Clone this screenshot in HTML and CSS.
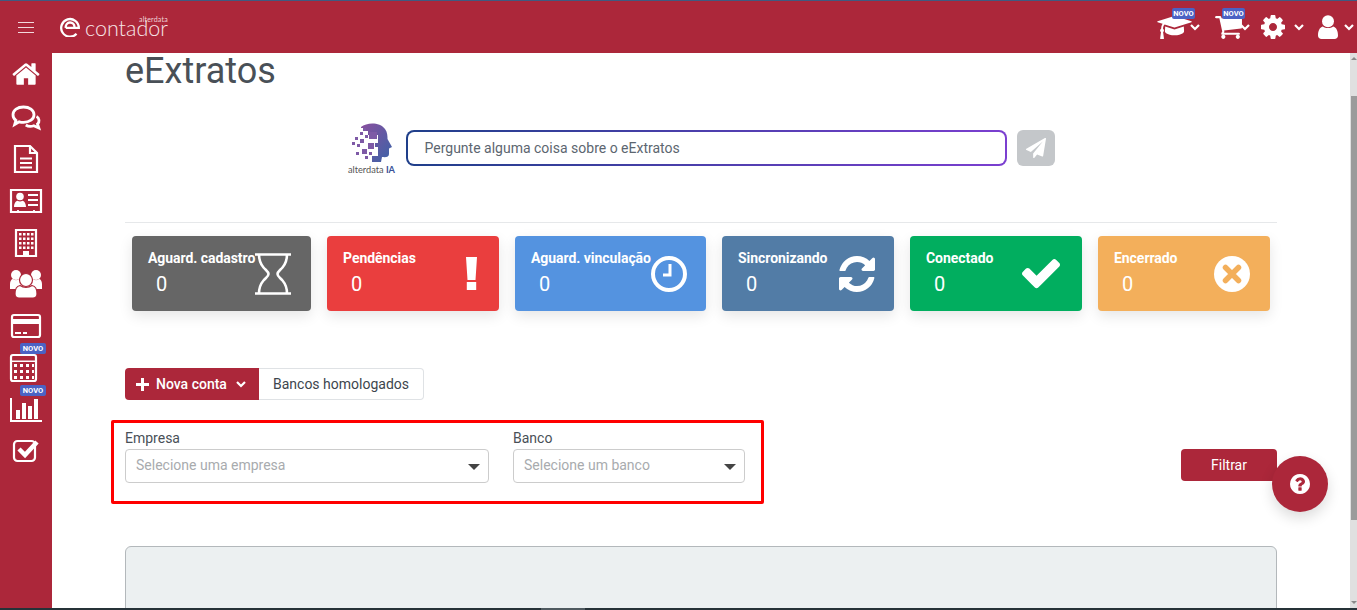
FILE: index.html
```html
<!DOCTYPE html>
<html lang="pt-BR">
<head>
<meta charset="utf-8">
<title>eExtratos</title>
<link rel="stylesheet" href="styles.css">
</head>
<body>
<header class="topbar">
  <div class="hamburger"><span></span><span></span><span></span></div>
  <div class="brand">
    <svg class="brand-mark" viewBox="0 0 20 20"><path d="M16.500 16.800A8.800 8.800 0 1 1 18.800 10.800H5.800M5.800 10.800C5.300 8 7.300 5.500 10 5.500s4.500 2 4.500 4.500" fill="none" stroke="#fff" stroke-width="2.300"/></svg>
    <div class="brand-text"><span class="brand-small">alterdata</span><span class="brand-name">contador</span></div>
  </div>
  <nav class="top-actions">
    <div class="top-item top-cap">
      <svg class="ic-cap" viewBox="0 128 2304 1536"><path fill="#fff" d="M1774 836l18 316q4 69-82 128t-235 93.500-323 34.500-323-34.500-235-93.500-82-128l18-316 574 181q22 7 48 7t48-7zm530-324q0 23-22 31l-1120 352q-4 1-10 1t-10-1l-652-206q-43 34-71 111.500t-34 178.500q63 36 63 109 0 69-58 107l58 433q2 14-8 25-9 11-24 11h-192q-15 0-24-11-10-11-8-25l58-433q-58-38-58-107 0-73 65-111 11-207 98-330l-333-104q-22-8-22-31t22-31l1120-352q4-1 10-1t10 1l1120 352q22 8 22 31z"/></svg>
      <span class="badge badge-top">NOVO</span>
      <svg class="chev" viewBox="0 0 10 7"><path d="M1 1l4 4 4-4" fill="none" stroke="#fff" stroke-width="2.200"/></svg>
    </div>
    <div class="top-item top-cart">
      <svg class="ic-cart" viewBox="0 256 1792 1408"><path fill="#fff" d="M704 1536q0 52-38 90t-90 38-90-38-38-90 38-90 90-38 90 38 38 90zm896 0q0 52-38 90t-90 38-90-38-38-90 38-90 90-38 90 38 38 90zm128-1088v512q0 24-16.500 42.500t-40.500 21.500l-1044 122q13 60 13 70 0 16-24 64h920q26 0 45 19t19 45-19 45-45 19h-1024q-26 0-45-19t-19-45q0-11 8-31.500t16-36 21.500-40 15.500-29.500l-177-823h-204q-26 0-45-19t-19-45 19-45 45-19h256q16 0 28.500 6.500t19.500 15.500 13 24.500 8 26 5.500 29.500 4.500 26h1201q26 0 45 19t19 45z"/></svg>
      <span class="badge badge-top">NOVO</span>
      <svg class="chev" viewBox="0 0 10 7"><path d="M1 1l4 4 4-4" fill="none" stroke="#fff" stroke-width="2.200"/></svg>
    </div>
    <div class="top-item top-gear">
      <svg class="ic-gear" viewBox="128 128 1536 1536"><path fill="#fff" d="M1152 896q0-106-75-181t-181-75-181 75-75 181 75 181 181 75 181-75 75-181zm512-109v222q0 12-8 23t-20 13l-185 28q-19 54-39 91 35 50 107 138 10 12 10 25t-9 23q-27 37-99 108t-94 71q-12 0-26-9l-138-108q-44 23-91 38-16 136-29 186-7 28-36 28h-222q-14 0-24.500-8.500t-11.500-21.500l-28-184q-49-16-90-37l-141 107q-10 9-25 9-14 0-25-11-126-114-165-168-7-10-7-23 0-12 8-23 15-21 51-66.500t54-70.500q-27-50-41-99l-183-27q-13-2-21-12.500t-8-23.500v-222q0-12 8-23t19-13l186-28q14-46 39-92-40-57-107-138-10-12-10-24 0-10 9-23 26-36 98.500-107.500t94.500-71.500q13 0 26 10l138 107q44-23 91-38 16-136 29-186 7-28 36-28h222q14 0 24.500 8.500t11.500 21.500l28 184q49 16 90 37l142-107q9-9 24-9 13 0 25 10 129 119 165 170 7 8 7 22 0 12-8 23-15 21-51 66.500t-54 70.500q26 50 41 98l183 28q13 2 21 12.500t8 23.500z"/></svg>
      <svg class="chev" viewBox="0 0 10 7"><path d="M1 1l4 4 4-4" fill="none" stroke="#fff" stroke-width="2.200"/></svg>
    </div>
    <div class="top-item top-user">
      <svg class="ic-user" viewBox="0 0 20 24"><circle cx="10" cy="6.200" r="6"/><path d="M0 20.500C0 16 1.500 12.500 4.800 11.500c3 2 7.400 2 10.400 0C18.500 12.500 20 16 20 20.500 20 22.800 18.500 24 16.500 24h-13C1.500 24 0 22.800 0 20.500z"/></svg>
      <svg class="chev" viewBox="0 0 10 7"><path d="M1 1l4 4 4-4" fill="none" stroke="#fff" stroke-width="2.200"/></svg>
    </div>
  </nav>
</header>

<div class="shell">
  <aside class="sidebar">
    <div class="nav-item"><svg class="nav-ico ic-home" viewBox="0 0 1792 1792"><path d="M1472 992v480q0 26-19 45t-45 19h-384v-384h-256v384h-384q-26 0-45-19t-19-45v-480q0-1 .5-3t.5-3l575-474 575 474q1 2 1 6zm223-69l-62 74q-8 9-21 11h-3q-13 0-21-7l-692-577-692 577q-12 8-24 7-13-2-21-11l-62-74q-8-10-7-23.500t11-21.500l719-599q32-26 76-26t76 26l244 204v-195q0-14 9-23t23-9h192q14 0 23 9t9 23v408l219 182q10 8 11 21.500t-7 23.500z"/></svg></div>
    <div class="nav-item"><svg class="nav-ico" viewBox="0 0 52 42"><path class="ln bold" d="M36.500 21.500c3 1.500 3.300 5.500 1 7.500l1.300 4-5-2.200c-2.800 1-6 .6-8-.8"/><path class="ln bold" d="M23.500 12c6 0 10.500 3.300 10.500 7.700s-4.500 7.700-10.500 7.700c-1.500 0-3-.2-4.300-.6L14.700 29.500l1.200-4.200c-2-1.400-2.900-3.400-2.900-5.600 0-4.400 4.500-7.700 10.500-7.700z"/></svg></div>
    <div class="nav-item"><svg class="nav-ico" viewBox="0 0 52 42"><path class="ln" d="M15 9h15l7 7v19H15z"/><path class="ln" d="M30 9v7h7"/><path class="ln thin" d="M20 21.500h12M20 26h12M20 30.500h12"/></svg></div>
    <div class="nav-item"><svg class="nav-ico" viewBox="0 0 52 42"><path class="ln" d="M11 11h30v22H11z"/><circle class="fl" cx="20" cy="17.500" r="3.800"/><path class="fl" d="M14 28c0-4 2-6 3.500-6.300 1.500 1 3.500 1 5 0C24 22 26 24 26 28z"/><path class="ln thin" d="M28 16h10M28 21h10M28 26h10M18 31v3M34 31v3"/></svg></div>
    <div class="nav-item"><svg class="nav-ico" viewBox="0 0 52 42"><path class="ln" d="M16 9h20v26H16z"/><path class="fl" d="M23 30h6v5h-6zM19 12h2.500v2.500H19zM23 12h2.500v2.500H23zM27 12h2.500v2.500H27zM31 12h2.500v2.500H31zM19 16.500h2.500V19H19zM23 16.500h2.500V19H23zM27 16.500h2.500V19H27zM31 16.500h2.500V19H31zM19 21h2.500v2.500H19zM23 21h2.500v2.500H23zM27 21h2.500v2.500H27zM31 21h2.500v2.500H31zM19 25.500h2.500V28H19zM23 25.500h2.500V28H23zM27 25.500h2.500V28H27zM31 25.500h2.500V28H31z"/></svg></div>
    <div class="nav-item"><svg class="nav-ico" viewBox="0 0 52 42"><circle class="fl" cx="16" cy="13" r="5"/><circle class="fl" cx="36" cy="13" r="5"/><path class="fl" d="M10 27v-5c0-3 1.500-5 3-5 2 1.500 4 1.500 6 0h14c2 1.500 4 1.500 6 0 1.500 0 3 2 3 5v5z"/><circle class="fl halo" cx="26" cy="18" r="6.500"/><path class="fl halo" d="M15 32c0-5 2-8 5-8.500 3.500 2.500 8.500 2.500 12 0 3 .5 5 3.500 5 8.500 0 2.500-2 4-4 4H19c-2 0-4-1.500-4-4z"/></svg></div>
    <div class="nav-item"><svg class="nav-ico" viewBox="0 0 52 42"><rect class="ln" x="12" y="11" width="28" height="22" rx="2"/><path class="fl" d="M12 15h28v5H12zM15 28h6v2h-6zM23 28h4v2h-4z"/></svg></div>
    <div class="nav-item"><svg class="nav-ico" viewBox="0 0 52 42"><rect class="ln" x="11" y="9" width="25" height="26" rx="2"/><path class="fl" d="M11 14.500h25V16H11zM14 18h3v3h-3zM20 18h3v3h-3zM26 18h3v3h-3zM32 18h2v3h-2zM14 24h3v3h-3zM20 24h3v3h-3zM26 24h3v3h-3zM32 24h2v3h-2zM14 30h3v3h-3zM20 30h3v3h-3zM26 30h3v3h-3zM32 30h2v3h-2z"/></svg><span class="badge badge-side">NOVO</span></div>
    <div class="nav-item"><svg class="nav-ico" viewBox="0 0 52 42"><path class="fl" d="M10 10h2v22h30v2H10zM16 22h4v9h-4zM22 15h4v16h-4zM28 18h4v13h-4zM34 11h4v20h-4z"/></svg><span class="badge badge-side">NOVO</span></div>
    <div class="nav-item"><svg class="nav-ico" viewBox="0 0 52 42"><rect class="ln" x="14" y="11" width="21" height="20" rx="3.500"/><path class="tick" d="M19 19l6 6 12-13"/></svg></div>
  </aside>

  <main class="content">
    <h1 class="page-title">eExtratos</h1>

    <section class="ask">
      <div class="ai-logo">
        <svg class="ai-mark" viewBox="0 0 48 40">
          <defs><linearGradient id="aiGrad" x1="0" y1="0" x2="1" y2="1"><stop offset="0" stop-color="#8a4f9e"/><stop offset="1" stop-color="#3a63a8"/></linearGradient></defs>
          <path fill="url(#aiGrad)" d="M13 4C19-1 32-1 37 6c2.500 3.500 2.500 7 2.500 10l4.500 8-3 1.500V31c0 3-3 3.500-7 3l-1 5H24v-6h6v-9h-3v-4h3v-8H20V8h-4V5h-3z"/>
          <path fill="#7e5aa6" d="M21 9h8v7h-8zM12 9h3v3h-3zM17 12h3v3h-3zM7 14h3v3H7zM12 16h4v4h-4zM4 19h3v3H4zM9 21h3v3H9zM20 20h6v6h-6zM14 26h5v5h-5zM8 29h3v3H8zM21 29h3v3h-3zM17 33h3v3h-3zM15 5h3v3h-3z"/>
        </svg>
        <span class="ai-name">alterdata <b>IA</b></span>
      </div>
      <div class="ask-field">Pergunte alguma coisa sobre o eExtratos</div>
      <button class="ask-send" type="button"><svg class="ic-send" viewBox="0 0 1792 1792"><path fill="#fff" d="M1764 11q33 24 27 64l-256 1536q-5 29-32 45-14 8-31 8-11 0-24-5l-453-185-242 295q-18 23-49 23-13 0-22-4-19-7-30.500-23.500t-11.500-36.500v-349l864-1059-1069 925-395-162q-37-14-40-55-2-40 32-59l1664-960q15-9 32-9 20 0 36 11z"/></svg></button>
    </section>

    <hr class="divider">

    <section class="cards">
      <article class="card card-gray">
        <div class="card-text"><div class="card-title">Aguard. cadastro</div><div class="card-value">0</div></div>
        <svg class="card-ico ic-hour" viewBox="0 0 36 42"><path d="M0 1.500h36M0 40.500h36M4 1.500c0 5 1.500 9.500 4.500 13 2.500 2.800 5 4 5 6.500s-2.500 3.700-5 6.500c-3 3.500-4.500 8-4.500 13M32 1.500c0 5-1.500 9.500-4.500 13-2.500 2.800-5 4-5 6.500s2.500 3.700 5 6.500c3 3.500 4.500 8 4.500 13" fill="none" stroke="#fff" stroke-width="2.600"/></svg>
      </article>
      <article class="card card-red">
        <div class="card-text"><div class="card-title">Pendências</div><div class="card-value">0</div></div>
        <svg class="card-ico ic-excl" viewBox="0 0 11 33"><path fill="#fff" d="M0 0h11L9.500 23h-8zM.8 25h9.400v8H.8z"/></svg>
      </article>
      <article class="card card-blue">
        <div class="card-text"><div class="card-title">Aguard. vinculação</div><div class="card-value">0</div></div>
        <svg class="card-ico ic-clock" viewBox="0 0 36 36"><circle cx="18" cy="18" r="16" fill="none" stroke="#fff" stroke-width="4"/><path d="M19 8v11h-7" fill="none" stroke="#fff" stroke-width="3"/></svg>
      </article>
      <article class="card card-steel">
        <div class="card-text"><div class="card-title">Sincronizando</div><div class="card-value">0</div></div>
        <svg class="card-ico ic-sync" viewBox="128 128 1536 1536"><path fill="#fff" d="M1639 1056q0 5-1 7-64 268-268 434.500t-478 166.500q-146 0-282.500-55t-243.500-157l-129 129q-19 19-45 19t-45-19-19-45v-448q0-26 19-45t45-19h448q26 0 45 19t19 45-19 45l-137 137q71 66 161 102t187 36q134 0 250-65t186-179q11-17 53-117 8-23 30-23h192q13 0 22.500 9.500t9.500 22.500zm25-800v448q0 26-19 45t-45 19h-448q-26 0-45-19t-19-45 19-45l138-138q-148-137-349-137-134 0-250 65t-186 179q-11 17-53 117-8 23-30 23h-199q-13 0-22.500-9.500t-9.500-22.500v-7q65-268 270-434.500t480-166.500q146 0 284 55.500t245 156.500l130-129q19-19 45-19t45 19 19 45z"/></svg>
      </article>
      <article class="card card-green">
        <div class="card-text"><div class="card-title">Conectado</div><div class="card-value">0</div></div>
        <svg class="card-ico ic-check" viewBox="121 340 1550 1210"><path fill="#fff" d="M1671 566q0 40-28 68l-724 724-136 136q-28 28-68 28t-68-28l-136-136-362-362q-28-28-28-68t28-68l136-136q28-28 68-28t68 28l294 295 656-657q28-28 68-28t68 28l136 136q28 28 28 68z"/></svg>
      </article>
      <article class="card card-orange">
        <div class="card-text"><div class="card-title">Encerrado</div><div class="card-value">0</div></div>
        <svg class="card-ico ic-times" viewBox="0 0 36 36"><circle cx="18" cy="18" r="18" fill="#fff"/><path d="M11.500 11.500l13 13M24.500 11.500l-13 13" stroke="#f3af5b" stroke-width="5.500" stroke-linecap="round"/></svg>
      </article>
    </section>

    <div class="btn-group">
      <button class="btn-primary" type="button">
        <svg class="ic-plus" viewBox="0 0 13 13"><path d="M0 5h5V0h3v5h5v3H8v5H5V8H0z" fill="#fff"/></svg>
        Nova conta
        <svg class="chev chev-btn" viewBox="0 0 10 7"><path d="M1 1l4 4 4-4" fill="none" stroke="#fff" stroke-width="2.200"/></svg>
      </button>
      <button class="btn-outline" type="button">Bancos homologados</button>
    </div>

    <section class="filters">
      <div class="filter-box">
        <label class="field field-company"><span class="field-label">Empresa</span><span class="select"><span>Selecione uma empresa</span><i class="caret"></i></span></label>
        <label class="field field-bank"><span class="field-label">Banco</span><span class="select"><span>Selecione um banco</span><i class="caret"></i></span></label>
      </div>
      <button class="btn-filter" type="button">Filtrar</button>
    </section>

    <section class="panel"></section>
  </main>

  <div class="scrollbar">
    <i class="arrow-up"></i>
    <div class="scroll-thumb"></div>
    <i class="arrow-down"></i>
  </div>

  <button class="fab" type="button"><svg class="ic-help" viewBox="128 128 1536 1536"><path fill="#fff" d="M1024 1376v-192q0-14-9-23t-23-9h-192q-14 0-23 9t-9 23v192q0 14 9 23t23 9h192q14 0 23-9t9-23zm256-672q0-88-55.500-163t-138.500-116-170-41q-243 0-371 213-15 24 8 42l132 100q7 6 19 6 16 0 25-12 53-68 86-92 34-24 86-24 48 0 85.500 26t37.500 59q0 38-20 61t-68 45q-63 28-115.500 86.500t-52.500 125.500v36q0 14 9 23t23 9h192q14 0 23-9t9-23q0-19 21.500-49.500t54.500-49.500q32-18 49-28.500t46-35 44.500-48 28-60.500 12.500-81zm384 192q0 209-103 385.500t-279.500 279.500-385.500 103-385.500-103-279.500-279.500-103-385.500 103-385.500 279.500-279.500 385.500-103 385.500 103 279.500 279.500 103 385.500z"/></svg></button>
</div>

<div class="taskstrip"><span class="task-tab"></span></div>
</body>
</html>
```

FILE: styles.css
```css
* { box-sizing: border-box; }
html, body { height: 100%; margin: 0; }
body {
  display: flex;
  flex-direction: column;
  overflow: hidden;
  font-family: Roboto, "Liberation Sans", sans-serif;
  color: #495057;
  background: #fff;
}
button { font-family: inherit; cursor: pointer; }

/* Header */
.topbar {
  position: relative;
  z-index: 2;
  flex: 0 0 53px;
  display: flex;
  align-items: center;
  padding-left: 18px;
  background: #ac273a;
  border-top: 1px solid #3f5a80;
}
.hamburger { display: flex; flex-direction: column; gap: 4px; width: 16px; margin-top: 1px; }
.hamburger span { display: block; height: 1px; background: #f3d9dd; }
.brand { display: flex; align-items: flex-end; margin-left: 26px; margin-top: 2px; color: #fff; }
.brand-mark { width: 20px; height: 20px; margin-bottom: 3px; }
.brand-text { display: flex; flex-direction: column; align-items: flex-end; margin-left: 5px; margin-bottom: 6px; }
.brand-small { font: 400 7px/6px Lato, sans-serif; color: #f0d5d9; letter-spacing: .2px; }
.brand-name { font: 300 21.500px/12px Lato, sans-serif; color: #f7e6e8; }

.top-actions { margin-left: auto; display: flex; align-items: center; height: 100%; }
.top-item { position: relative; display: flex; align-items: center; }
.top-cap { margin-right: 14px; }
.top-cart { margin-right: 11px; }
.top-gear { margin-right: 14px; }
.top-user { margin-right: 3px; }
.ic-cap { width: 35px; height: 23px; margin-right: -2px; }
.ic-cart { width: 29px; height: 23px; margin-right: -3px; }
.ic-gear { width: 24px; height: 24px; margin-right: 9px; }
.ic-user { width: 20px; height: 24px; margin-right: 6px; fill: #fff; }
.chev { width: 10px; height: 7px; flex: none; margin-top: 1px; }
.badge {
  position: absolute;
  display: block;
  background: #4b62c4;
  color: #fff;
  font: 700 7.500px/11px Roboto, sans-serif;
  text-align: center;
  border-radius: 2px;
}
.badge-top { width: 23px; height: 11px; top: -8px; right: 5px; }

/* Shell */
.shell { position: relative; flex: 1; min-height: 0; display: flex; }
.sidebar { flex: 0 0 52px; background: #ac273a; }
.nav-item { position: relative; height: 41.900px; display: flex; align-items: center; justify-content: center; }
.nav-ico { width: 52px; height: 42px; flex: none; }
.ic-home { width: 30px; height: 30px; fill: #fff; }
.ln { fill: none; stroke: #fff; stroke-width: 2.200; }
.bold { stroke-width: 2.800; }
.thin { stroke-width: 1.800; }
.fl { fill: #fff; }
.halo { stroke: #ac273a; stroke-width: 1.200; }
.tick { fill: none; stroke: #fff; stroke-width: 4.500; }
.badge-side { width: 26px; height: 11px; top: -3px; left: 20px; }

/* Content */
.content { flex: 1; min-width: 0; padding: 0 73px; }
.page-title { margin: 0; font-size: 36px; font-weight: 400; line-height: 36px; color: #495057; }

.ask { display: flex; align-items: flex-start; justify-content: center; margin-top: 41px; height: 56px; }
.ai-logo { display: flex; flex-direction: column; align-items: center; width: 48px; margin-top: -7px; margin-right: 10px; }
.ai-mark { width: 48px; height: 40px; }
.ai-name { font: 400 9.200px/10px Lato, sans-serif; color: #555; white-space: nowrap; margin-top: 2px; }
.ai-name b { color: #3a5198; }
.ask-field {
  width: 601px;
  height: 36px;
  padding: 0 17px;
  font-size: 14px;
  line-height: 32px;
  color: #5c6670;
  border: 2px solid transparent;
  border-radius: 8px;
  background: linear-gradient(#fff, #fff) padding-box, linear-gradient(90deg, #1f3f8a, #7b3fd0) border-box;
}
.ask-send {
  width: 38px;
  height: 36px;
  margin-left: 10px;
  padding: 0;
  display: flex;
  align-items: center;
  justify-content: center;
  border: 0;
  border-radius: 6px;
  background: #c4c7ca;
}
.ic-send { width: 20px; height: 20px; }

.divider { margin: 36px 0 0; border: 0; border-top: 1px solid #e6e8ea; }

.cards {
  display: grid;
  grid-template-columns: 179px 172px 191px 172px 172px 172px;
  gap: 16px;
  margin: 13px 0 0 7px;
}
.card {
  position: relative;
  height: 75px;
  display: flex;
  justify-content: space-between;
  align-items: center;
  padding: 0 20px 0 16px;
  color: #fff;
  border-radius: 4px;
  box-shadow: 0 5px 14px rgba(0, 0, 0, .1);
}
.card-text { align-self: flex-start; padding-top: 13px; white-space: nowrap; }
.card-title { font-size: 14px; font-weight: 700; line-height: 18px; letter-spacing: -.05px; }
.card-value { font-size: 20px; line-height: 24px; margin: 5px 0 0 8px; }
.card-gray { background: #666; }
.card-red { background: #ea3e3e; }
.card-blue { background: #5493e0; }
.card-steel { background: #527ca6; }
.card-green { background: #01ae5f; }
.card-orange { background: #f3af5b; }
.card-ico { flex: none; margin-top: 0; }
.ic-hour { width: 36px; height: 42px; }
.ic-excl { width: 11px; height: 33px; margin-right: 2px; }
.ic-clock { width: 36px; height: 36px; margin-right: 1px; }
.ic-sync { width: 36px; height: 36px; margin-right: -1px; }
.ic-check { width: 38px; height: 30px; margin-right: 2px; }
.ic-times { width: 36px; height: 36px; }

.btn-group { display: flex; margin-top: 57px; height: 32px; }
.btn-primary, .btn-outline {
  height: 32px;
  padding: 0;
  font-size: 14px;
  display: flex;
  align-items: center;
}
.btn-primary {
  width: 134px;
  padding-left: 11px;
  color: #fff;
  font-weight: 500;
  background: #ac273a;
  border: 0;
  border-radius: 4px 0 0 4px;
}
.ic-plus { width: 13px; height: 13px; margin-right: 7px; }
.chev-btn { margin-left: 9px; }
.btn-outline {
  width: 165px;
  justify-content: center;
  color: #3d454d;
  background: #fff;
  border: 1px solid #dfe2e5;
  border-left: 0;
  border-radius: 0 4px 4px 0;
}

.filters { display: flex; justify-content: space-between; align-items: flex-start; margin: 20px 0 0 -14px; }
.filter-box {
  display: flex;
  gap: 24px;
  width: 653px;
  height: 84px;
  padding: 7px 0 0 11px;
  border: 3px solid #f00;
  border-radius: 2px;
}
.field { display: flex; flex-direction: column; }
.field-company { width: 364px; }
.field-bank { width: 232px; }
.field-label { font-size: 14px; line-height: 16px; margin-bottom: 3px; color: #495057; }
.select {
  height: 34px;
  display: flex;
  align-items: center;
  justify-content: space-between;
  padding: 0 8px 2px 10px;
  font-size: 14px;
  color: #a8abae;
  border: 1px solid #ccc;
  border-radius: 4px;
}
.caret { width: 0; height: 0; margin-top: 4px; border-style: solid; border-width: 6px 6px 0; border-color: #444 transparent transparent; }
.btn-filter {
  width: 96px;
  height: 32px;
  margin-top: 29px;
  color: #fff;
  font-size: 14px;
  font-weight: 400;
  background: #ac273a;
  border: 0;
  border-radius: 4px;
}
.panel {
  height: 80px;
  margin-top: 42px;
  background: #ecf0f1;
  border: 1px solid #b3b8bb;
  border-radius: 6px;
}

/* Scrollbar */
.scrollbar { flex: 0 0 7px; display: flex; flex-direction: column; align-items: flex-end; background: #e0e0e0; position: relative; }
.scroll-thumb { width: 6px; height: 424px; margin-top: 43px; background: #9b9b9b; }
.arrow-up, .arrow-down { position: absolute; left: 1px; width: 0; height: 0; border-style: solid; }
.arrow-up { top: 4px; border-width: 0 3px 3px; border-color: transparent transparent #8a8a8a; }
.arrow-down { bottom: 4px; border-width: 3px 3px 0; border-color: #8a8a8a transparent transparent; }

.fab {
  position: absolute;
  top: 403px;
  left: 1272px;
  width: 56px;
  height: 56px;
  padding: 0;
  display: flex;
  align-items: center;
  justify-content: center;
  background: #ac273a;
  border: 0;
  border-radius: 50%;
  box-shadow: 0 6px 14px rgba(0, 0, 0, .14);
}
.ic-help { width: 20px; height: 20px; }

.taskstrip { flex: 0 0 2px; background: #263238; position: relative; z-index: 2; }
.task-tab { position: absolute; left: 541px; top: 0; width: 44px; height: 2px; background: #4f5a60; }
```
